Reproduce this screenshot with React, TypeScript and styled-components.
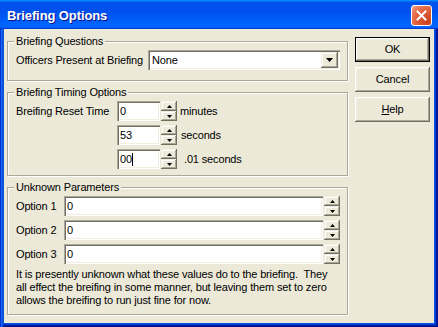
import React from 'react';
import styled, { createGlobalStyle } from 'styled-components';

const Global = createGlobalStyle`
  html, body { margin: 0; padding: 0; background: #ECE9D8; }
  body {
    font-family: "Liberation Sans", Arial, sans-serif;
    font-size: 11px;
    letter-spacing: -0.15px;
    color: #000;
  }
  * { box-sizing: border-box; }
`;

const Window = styled.div`
  width: 438px;
  height: 327px;
  display: flex;
  flex-direction: column;
  overflow: hidden;
`;

const TitleBar = styled.div`
  height: 29px;
  flex: none;
  display: flex;
  align-items: flex-start;
  justify-content: space-between;
  padding: 0 6px 0 7px;
  background: linear-gradient(180deg, #0997ff, #0053ee 8%, #0050ee 40%, #06f 88%, #06f 93%, #005bff 95%, #003dd7 96%, #003dd7);
`;

const Title = styled.div`
  color: #fff;
  font: bold 13px "Liberation Sans", Arial, sans-serif;
  letter-spacing: -0.1px;
  text-shadow: 1px 1px #0f1089;
  line-height: 15px;
  margin-top: 8px;
`;

const CloseButton = styled.div`
  width: 21px;
  height: 21px;
  margin-top: 5px;
  border: 1px solid #fff;
  border-radius: 3px;
  background: radial-gradient(circle at 85% 85%, #c8431d 0%, #e05c37 50%, #ea7d5f 80%, #f4b4a0 100%);
  display: flex;
  align-items: center;
  justify-content: center;
`;

const Frame = styled.div`
  flex: 1;
  display: flex;
  padding: 0 4px 4px;
  background: #0855dd;
  box-shadow: inset 1px 0 #0831d9, inset 2px 0 #166aee, inset 3px 0 #0855dd,
    inset -1px -1px #00138c, inset -2px -2px #001ea0, inset -3px -3px #003bda;
`;

const Body = styled.div`
  flex: 1;
  background: #ECE9D8;
  display: flex;
  gap: 7px;
  padding: 5px 4px 0 3px;
`;

const LeftColumn = styled.div`
  width: 341px;
  display: flex;
  flex-direction: column;
  gap: 4px;
`;

const Group = styled.fieldset<{ $pb: number }>`
  margin: 0;
  padding: 1px 7px ${p => p.$pb}px 8px;
  border: 1px solid #aca899;
  box-shadow: 1px 1px 0 #fff, inset 1px 1px 0 #fff;
  min-width: 0;
`;

const Legend = styled.legend`
  padding: 0 2px;
  margin-left: -2px;
  line-height: 15px;
  background: #ECE9D8;
`;

const QuestionRow = styled.div`
  display: grid;
  grid-template-columns: 132px 1fr;
  align-items: center;
`;

const Sunken = styled.div<{ $w?: number }>`
  height: 20px;
  ${p => (p.$w ? `width: ${p.$w}px;` : 'flex: 1;')}
  background: #fff;
  box-shadow: inset 1px 1px #aca899, inset 2px 2px #716f64, inset -1px -1px #fff, inset -2px -2px #f1efe2;
  padding: 0 2px 0 3px;
  display: flex;
  align-items: center;
  line-height: 13px;
  white-space: nowrap;
`;

const SelectBox = styled(Sunken)`
  padding: 2px 2px 2px 4px;
  justify-content: space-between;
`;

const raised = `
  background: #ECE9D8;
  box-shadow: inset -1px -1px #716f64, inset 1px 1px #f1efe2, inset -2px -2px #aca899, inset 2px 2px #fff;
`;

const DropButton = styled.div`
  width: 17px;
  height: 16px;
  ${raised}
  display: flex;
  align-items: center;
  justify-content: center;
`;

const Caret = styled.span`
  display: inline-block;
  width: 1px;
  height: 13px;
  background: #000;
`;

const TimingGrid = styled.div`
  display: grid;
  grid-template-columns: 100px 43px 16px auto;
  column-gap: 1px;
  row-gap: 4px;
  align-items: center;
`;

const OptionGrid = styled.div`
  display: grid;
  grid-template-columns: 47px 1fr 16px;
  column-gap: 1px;
  row-gap: 4px;
  align-items: center;
`;

const Label = styled.span`
  white-space: nowrap;
`;

const Unit = styled.span<{ $shift: number }>`
  padding-left: ${p => p.$shift}px;
  white-space: nowrap;
`;

const Spin = styled.div`
  width: 16px;
  height: 20px;
  display: flex;
  flex-direction: column;
`;

const SpinHalf = styled.div`
  height: 10px;
  ${raised}
  display: flex;
  align-items: center;
  justify-content: center;
`;

const Note = styled.p`
  margin: 4px 0 0;
  line-height: 13px;
  white-space: nowrap;
`;

const ButtonColumn = styled.div`
  width: 75px;
  display: flex;
  flex-direction: column;
  gap: 5px;
  padding-top: 3px;
`;

const Button = styled.div<{ $default?: boolean }>`
  height: 25px;
  display: flex;
  align-items: center;
  justify-content: center;
  background: #ECE9D8;
  box-shadow: ${p =>
    p.$default
      ? 'inset 0 0 0 1px #000, inset -2px -2px #716f64, inset 2px 2px #fff, inset -3px -3px #aca899, inset 3px 3px #f1efe2'
      : 'inset -1px -1px #716f64, inset 1px 1px #fff, inset -2px -2px #aca899, inset 2px 2px #f1efe2'};
  padding-bottom: 1px;
`;

const Underline = styled.span`
  text-decoration: underline;
`;

const Arrow = ({ up, big }: { up?: boolean; big?: boolean }) =>
  big ? (
    <svg width="7" height="4" viewBox="0 0 7 4">
      <path d="M0 0h7L3.5 4z" fill="#000" />
    </svg>
  ) : (
    <svg width="5" height="3" viewBox="0 0 5 3">
      <path d={up ? 'M2.5 0L5 3H0z' : 'M0 0h5L2.5 3z'} fill="#000" />
    </svg>
  );

const Spinner = () => (
  <Spin>
    <SpinHalf>
      <Arrow up />
    </SpinHalf>
    <SpinHalf>
      <Arrow />
    </SpinHalf>
  </Spin>
);

export default function App() {
  return (
    <>
      <Global />
      <Window>
        <TitleBar>
          <Title>Briefing Options</Title>
          <CloseButton>
            <svg width="11" height="11" viewBox="0 0 11 11">
              <path d="M1.5 1.5l8 8M9.5 1.5l-8 8" stroke="#fff" strokeWidth="2" strokeLinecap="square" />
            </svg>
          </CloseButton>
        </TitleBar>
        <Frame>
          <Body>
            <LeftColumn>
              <Group $pb={10}>
                <Legend>Briefing Questions</Legend>
                <QuestionRow>
                  <Label>Officers Present at Briefing</Label>
                  <SelectBox>
                    <span>None</span>
                    <DropButton>
                      <Arrow big />
                    </DropButton>
                  </SelectBox>
                </QuestionRow>
              </Group>
              <Group $pb={6}>
                <Legend>Briefing Timing Options</Legend>
                <TimingGrid>
                  <Label>Breifing Reset Time</Label>
                  <Sunken>0</Sunken>
                  <Spinner />
                  <Unit $shift={2}>minutes</Unit>
                  <span />
                  <Sunken>53</Sunken>
                  <Spinner />
                  <Unit $shift={3}>seconds</Unit>
                  <span />
                  <Sunken>
                    00
                    <Caret />
                  </Sunken>
                  <Spinner />
                  <Unit $shift={6}>.01 seconds</Unit>
                </TimingGrid>
              </Group>
              <Group $pb={7}>
                <Legend>Unknown Parameters</Legend>
                <OptionGrid>
                  <Label>Option 1</Label>
                  <Sunken>0</Sunken>
                  <Spinner />
                  <Label>Option 2</Label>
                  <Sunken>0</Sunken>
                  <Spinner />
                  <Label>Option 3</Label>
                  <Sunken>0</Sunken>
                  <Spinner />
                </OptionGrid>
                <Note>
                  It is presently unknown what these values do to the briefing.&nbsp; They
                  <br />
                  all effect the breifing in some manner, but leaving them set to zero
                  <br />
                  allows the breifing to run just fine for now.
                </Note>
              </Group>
            </LeftColumn>
            <ButtonColumn>
              <Button $default>OK</Button>
              <Button>Cancel</Button>
              <Button>
                <span>
                  <Underline>H</Underline>elp
                </span>
              </Button>
            </ButtonColumn>
          </Body>
        </Frame>
      </Window>
    </>
  );
}
